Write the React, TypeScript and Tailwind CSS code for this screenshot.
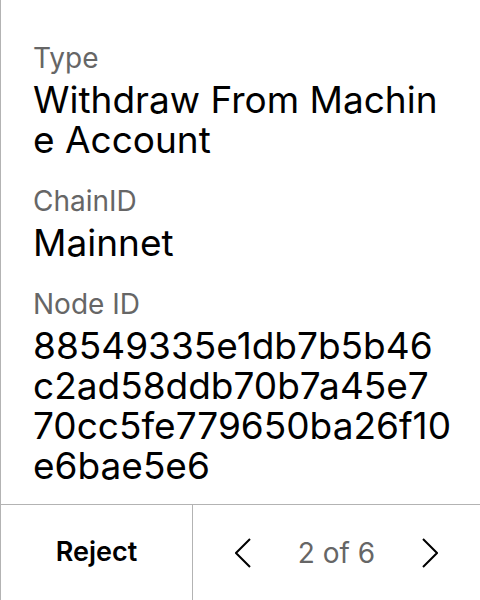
type Field = {
  label: string;
  value: string;
  pre?: boolean;
};

const fields: Field[] = [
  { label: "Type", value: "Withdraw From Machine Account" },
  { label: "ChainID", value: "Mainnet" },
  {
    label: "Node ID",
    value: "88549335e1db7b5b46\nc2ad58ddb70b7a45e7\n70cc5fe779650ba26f10\ne6bae5e6",
    pre: true,
  },
];

export default function App() {
  return (
    <div className="w-[480px] h-[600px] flex flex-col bg-white border-l border-[#b3b3b3] font-['Inter',sans-serif]">
      {/* Details */}
      <div className="flex-1 flex flex-col gap-[23px] px-8 pt-10 overflow-hidden">
        {fields.map((f) => (
          <div key={f.label} className="flex flex-col">
            <span className="text-[28px] leading-9 text-[#666]">{f.label}</span>
            <span
              className={
                f.pre
                  ? "mt-1 text-[37px] leading-10 text-black whitespace-pre"
                  : "mt-1 text-[37px] leading-10 text-black break-all"
              }
            >
              {f.value}
            </span>
          </div>
        ))}
      </div>

      {/* Footer */}
      <div className="h-24 flex border-t border-[#b3b3b3]">
        <button className="w-[192px] border-r border-[#b3b3b3] text-[27px] font-semibold text-black">
          Reject
        </button>
        <div className="flex-1 flex items-center justify-between px-[42px]">
          <svg width="16" height="30" viewBox="0 0 16 30" fill="none" stroke="black" strokeWidth="2">
            <polyline points="15,1 1,15 15,29" />
          </svg>
          <span className="text-[28px] text-[#666]">2 of 6</span>
          <svg width="16" height="30" viewBox="0 0 16 30" fill="none" stroke="black" strokeWidth="2">
            <polyline points="1,1 15,15 1,29" />
          </svg>
        </div>
      </div>
    </div>
  );
}
